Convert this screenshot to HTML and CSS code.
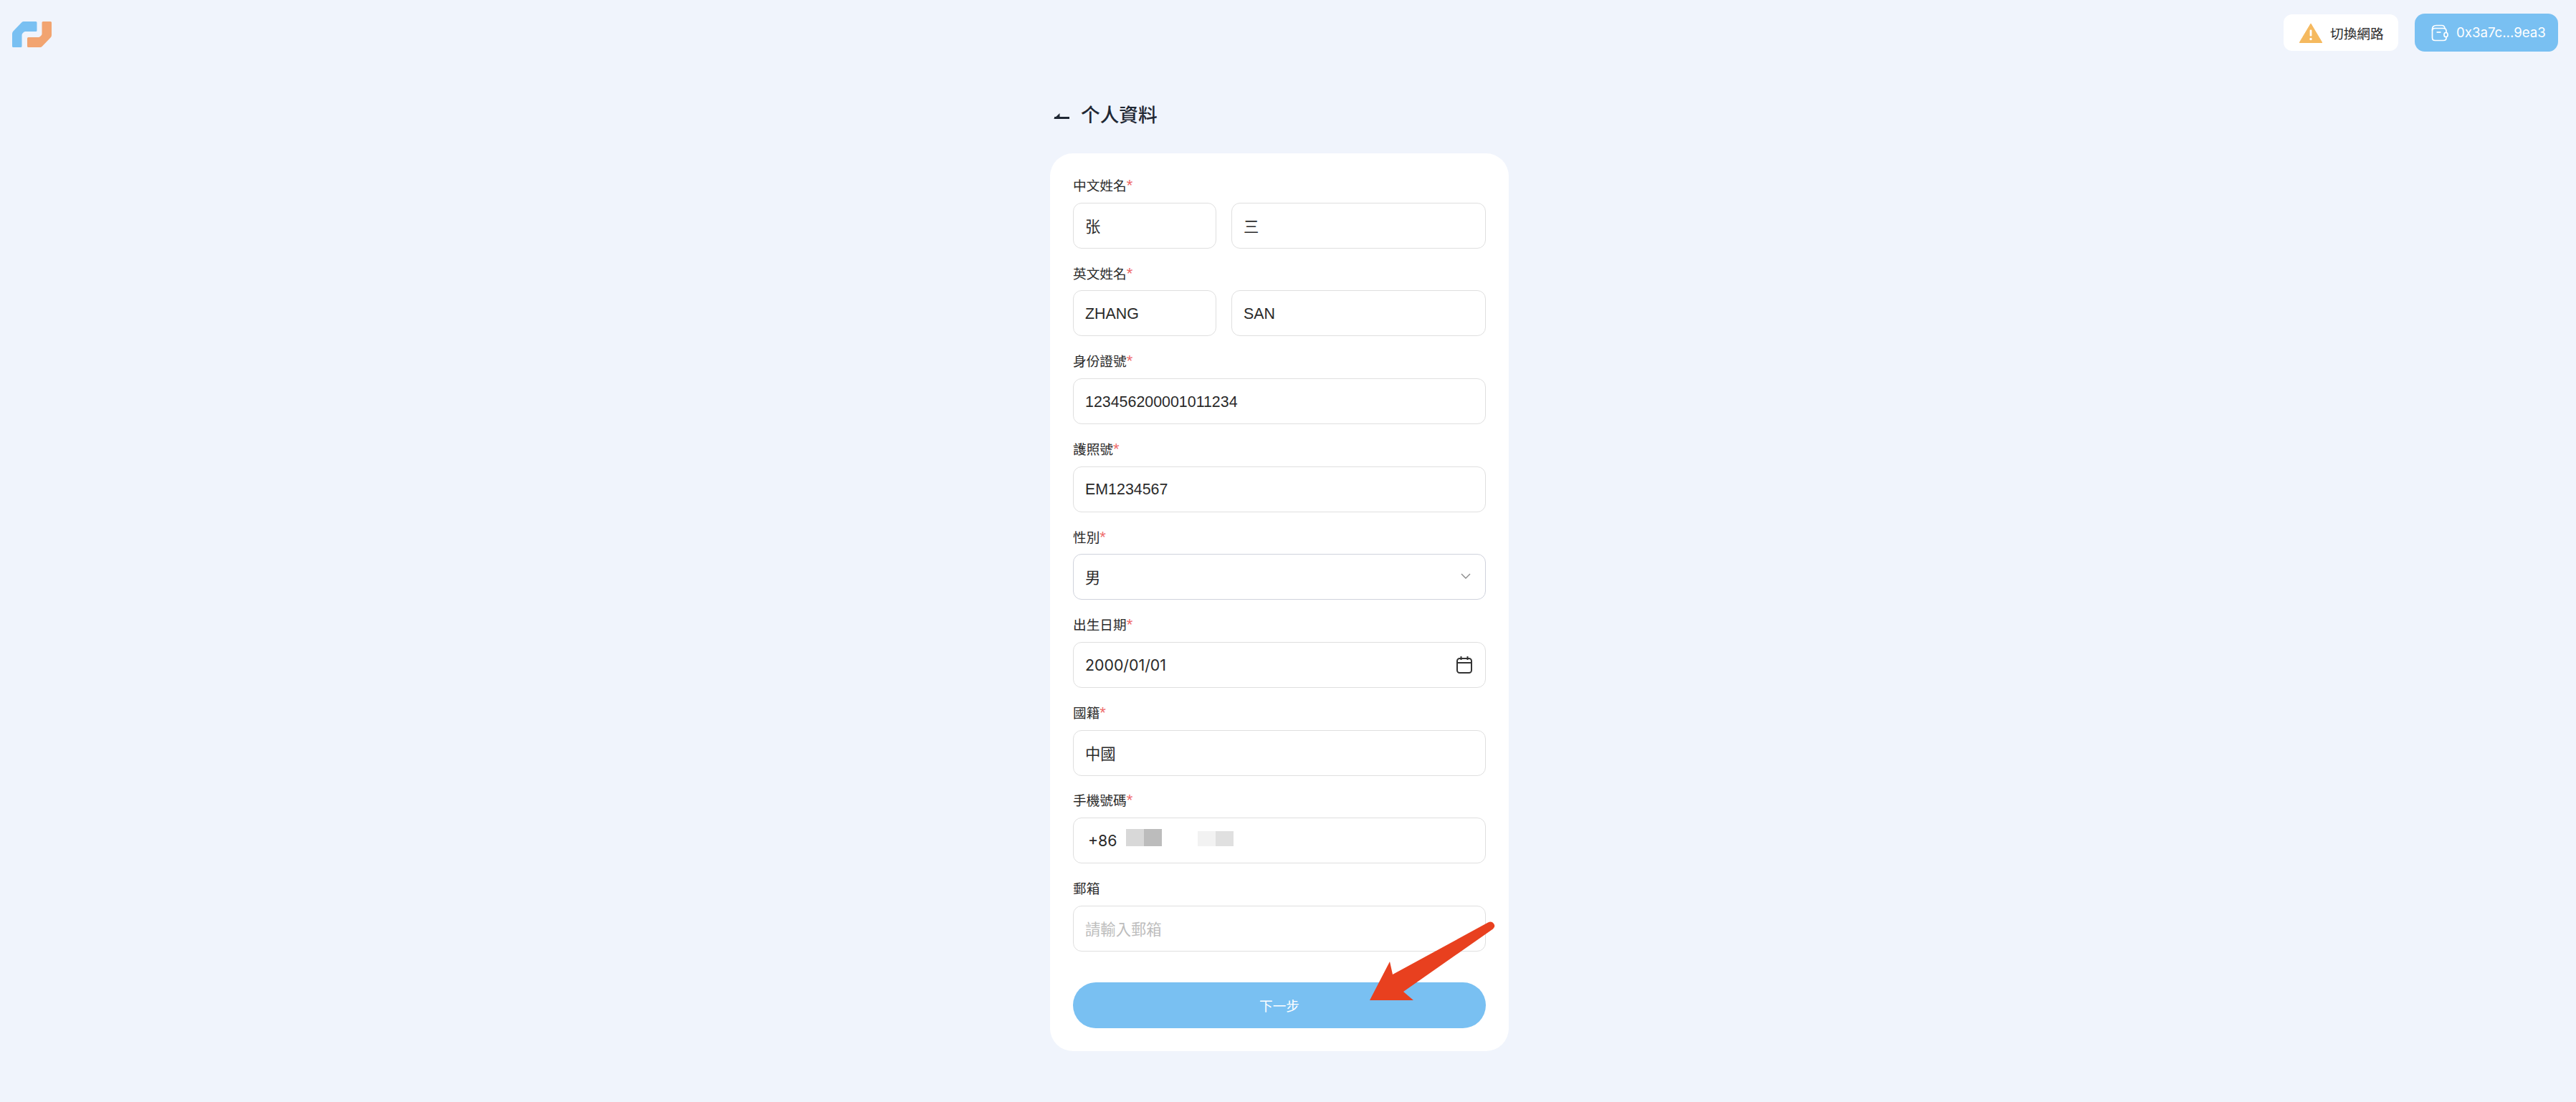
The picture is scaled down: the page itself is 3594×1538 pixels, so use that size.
FILE: index.html
```html
<!DOCTYPE html>
<html lang="zh-Hant">
<head>
    <meta charset="UTF-8">
    <title>个人資料</title>
    <link rel="stylesheet" href="styles.css">
</head>
<body>
    <div class="page">
        <div class="header">
            <svg class="logo" width="55" height="36" viewBox="0 0 55 36" aria-label="Logo">
                <path d="M1.5 13.5 L13.5 1 Q14.5 0 16 0 H33 Q34.5 0 34.5 1.5 V12.5 Q34.5 14 33 14 H18.5 Q17 14 16 15 L14.5 16.5 Q13.5 17.5 13.5 19 V34.5 Q13.5 36 12 36 H1.5 Q0 36 0 34.5 V17 Q0 15 1.5 13.5 Z" fill="#79c0f2"/>
                <path d="M53.5 22.5 L41.5 35 Q40.5 36 39 36 H22.5 Q21 36 21 34.5 V23.5 Q21 22 22.5 22 H36.5 Q38 22 39 21 L40.5 19.5 Q41.5 18.5 41.5 17 V1.5 Q41.5 0 43 0 H53.5 Q55 0 55 1.5 V19 Q55 21 53.5 22.5 Z" fill="#f2a470"/>
            </svg>
            <div class="header-actions">
                <div class="switch-btn">
                    <svg width="32" height="28" viewBox="0 0 32 28">
                        <path d="M16 1 L31.5 27 Q32 28 31 28 H1 Q0 28 .5 27 Z" fill="#f5b95f" stroke="#f5b95f" stroke-linejoin="round"/>
                        <rect x="14.6" y="9.5" width="2.8" height="9" rx="1.2" fill="#fff"/>
                        <circle cx="16" cy="22.5" r="1.7" fill="#fff"/>
                    </svg>
                    <span>切換網路</span>
                </div>
                <div class="wallet-btn">
                    <svg width="24" height="24" viewBox="0 0 24 24" fill="none" stroke="#fff" stroke-width="1.7">
                        <path d="M1.5 8.5 Q1.5 5.5 5 5.5 H17 Q21 5.5 21 9 V11.5"/>
                        <path d="M21 17.5 V19 Q21 22.5 17 22.5 H5.5 Q1.5 22.5 1.5 18.5 V7 Q1.5 1.5 7 1.5 H15 Q18.5 1.5 19 5.5"/>
                        <path d="M7.5 11 H13.5"/>
                        <rect x="18" y="11.5" width="5" height="6" rx="2.5"/>
                    </svg>
                    <span>0x3a7c...9ea3</span>
                </div>
            </div>
        </div>

        <div class="main">
            <div class="title-row">
                <svg width="22" height="10" viewBox="0 0 22 10" fill="none">
                    <path d="M1 7.5 H22" stroke="#1f2733" stroke-width="3"/>
                    <path d="M0 9 L8.5 1 V8 Z" fill="#1f2733"/>
                </svg>
                <h1>个人資料</h1>
            </div>

            <div class="card">
                <div class="field">
                    <div class="label">中文姓名<span class="req">*</span></div>
                    <div class="name-row">
                        <div class="input">张</div>
                        <div class="input">三</div>
                    </div>
                </div>
                <div class="field">
                    <div class="label">英文姓名<span class="req">*</span></div>
                    <div class="name-row">
                        <div class="input latin">ZHANG</div>
                        <div class="input latin">SAN</div>
                    </div>
                </div>
                <div class="field">
                    <div class="label">身份證號<span class="req">*</span></div>
                    <div class="input latin">123456200001011234</div>
                </div>
                <div class="field">
                    <div class="label">護照號<span class="req">*</span></div>
                    <div class="input latin">EM1234567</div>
                </div>
                <div class="field">
                    <div class="label">性別<span class="req">*</span></div>
                    <div class="input select">
                        <span>男</span>
                        <svg width="14" height="8" viewBox="0 0 14 8" fill="none" stroke="#8a8a8a" stroke-width="1.4">
                            <path d="M1 1 L7 7 L13 1"/>
                        </svg>
                    </div>
                </div>
                <div class="field">
                    <div class="label">出生日期<span class="req">*</span></div>
                    <div class="input date">
                        <span>2000/01/01</span>
                        <svg width="22" height="24" viewBox="0 0 22 24" fill="none" stroke="#333" stroke-width="2">
                            <rect x="1" y="3" width="20" height="20" rx="3.5"/>
                            <path d="M1 9 H21 M6.5 0 V5 M15.5 0 V5"/>
                        </svg>
                    </div>
                </div>
                <div class="field">
                    <div class="label">國籍<span class="req">*</span></div>
                    <div class="input">中國</div>
                </div>
                <div class="field">
                    <div class="label">手機號碼<span class="req">*</span></div>
                    <div class="input phone">
                        <span class="prefix">+86</span>
                        <div class="mosaic mosaic-a"><i></i><i></i></div>
                        <div class="mosaic mosaic-b"><i></i><i></i></div>
                    </div>
                </div>
                <div class="field">
                    <div class="label">郵箱</div>
                    <div class="input placeholder">請輸入郵箱</div>
                </div>
                <div class="next-btn">下一步</div>
            </div>
        </div>

        <!-- annotation arrow on top of the screenshot -->
        <svg class="annotation" width="190" height="120" viewBox="0 0 190 120">
            <path d="M1 115 L29 61 L33 79 L166 6.5 Q171 4 174 8 Q177 12 173 15.5 L48 103 L62 115 Z" fill="#e8401f"/>
        </svg>
    </div>
</body>
</html>
```

FILE: styles.css
```css
:root {
    --bg-color: #f0f4fc;
    --blue: #79c0f2;
    --text-color: #2a2a2a;
    --border-color: #dfdfdf;
}

body {
    margin: 0;
    background-color: var(--bg-color);
    color: var(--text-color);
    font-family: "Liberation Sans", "Noto Sans CJK SC", sans-serif;
}

.page {
    position: relative;
    min-height: 1538px;
    overflow: hidden;
}

.header {
    display: flex;
    justify-content: space-between;
    align-items: center;
    height: 91px;
    padding: 0 25px 0 17px;
}

.logo {
    margin-top: 5px;
}

.header-actions {
    display: flex;
    align-items: center;
    gap: 23px;
}

.switch-btn {
    display: flex;
    align-items: center;
    gap: 11px;
    box-sizing: border-box;
    width: 160px;
    height: 51px;
    padding-left: 22px;
    background-color: #ffffff;
    border-radius: 12px;
    font-size: 18.67px;
}

.wallet-btn {
    display: flex;
    align-items: center;
    gap: 11px;
    box-sizing: border-box;
    width: 200px;
    height: 53px;
    padding-left: 23px;
    background-color: var(--blue);
    border-radius: 14px;
    color: #ffffff;
    font-family: Inter, "Noto Sans CJK SC", sans-serif;
    font-size: 18.67px;
}

.main {
    display: flex;
    flex-direction: column;
    align-items: center;
    padding: 49px 24px 0 0;
}

.title-row {
    display: flex;
    align-items: center;
    gap: 16px;
    box-sizing: border-box;
    width: 640px;
    height: 40px;
    margin-bottom: 33.5px;
    padding-left: 5px;
}

.title-row svg {
    margin-top: 4px;
}

.title-row h1 {
    margin: 0 0 3px;
    font-size: 26.67px;
    font-weight: 500;
    color: #1f2733;
}

.card {
    display: flex;
    flex-direction: column;
    gap: 21.33px;
    box-sizing: border-box;
    width: 640px;
    padding: 32px;
    background-color: #ffffff;
    border-radius: 32px;
}

.label {
    box-sizing: border-box;
    height: 26.67px;
    margin-bottom: 10.67px;
    padding-top: 1.5px;
    font-size: 18.67px;
    line-height: 26.67px;
}

.req {
    color: #ee6a6a;
    font-size: 22px;
    line-height: 20px;
}

.name-row {
    display: grid;
    grid-template-columns: 200px 1fr;
    gap: 21px;
}

.input {
    display: flex;
    align-items: center;
    box-sizing: border-box;
    height: 64px;
    padding: 0 16px;
    border: 1.5px solid var(--border-color);
    border-radius: 12px;
    font-size: 21.33px;
}

.latin {
    padding-top: 2px;
    font-size: 21.4px;
}

.select {
    justify-content: space-between;
    padding-right: 20px;
    padding-bottom: 2px;
    border-color: #cfd2dc;
}

.date {
    justify-content: space-between;
    font-family: Inter, "Noto Sans CJK SC", sans-serif;
    padding-right: 18px;
}

.phone {
    font-family: Inter, "Noto Sans CJK SC", sans-serif;
}

.prefix {
    margin: 0 12px 0 4px;
}

.mosaic {
    display: flex;
    align-self: flex-start;
    width: 50px;
    margin-top: 14px;
}

.mosaic i {
    flex: 1;
}

.mosaic-a {
    height: 24px;
    margin-top: 15px;
}

.mosaic-a i:first-child {
    background-color: #d8d8d8;
}

.mosaic-a i:last-child {
    background-color: #bcbcbc;
}

.mosaic-b {
    height: 21px;
    margin-top: 18px;
    margin-left: 50px;
}

.mosaic-b i:first-child {
    background-color: #f2f2f2;
}

.mosaic-b i:last-child {
    background-color: #e0e0e0;
}

.placeholder {
    color: #bdbdbd;
}

.next-btn {
    display: flex;
    align-items: center;
    justify-content: center;
    height: 64px;
    margin-top: 21.33px;
    background-color: var(--blue);
    border-radius: 32px;
    color: #ffffff;
    font-size: 18.67px;
}

.annotation {
    position: absolute;
    left: 1910px;
    top: 1281px;
}
```
